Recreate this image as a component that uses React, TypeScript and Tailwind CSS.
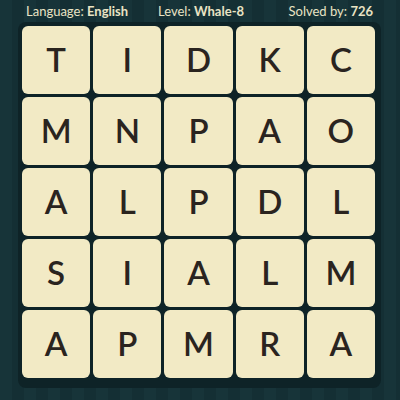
const rows = [
  ["T", "I", "D", "K", "C"],
  ["M", "N", "P", "A", "O"],
  ["A", "L", "P", "D", "L"],
  ["S", "I", "A", "L", "M"],
  ["A", "P", "M", "R", "A"],
];

export default function App() {
  return (
    <div className="w-[400px] h-[400px] overflow-hidden bg-[repeating-linear-gradient(90deg,#173439_0_12px,#142f34_12px_24px)] font-['Lato',sans-serif]">
      <div className="h-[22px] flex items-center pl-[26px] pr-[27px] text-[13px] text-[#e9e3c4] leading-none">
        <span className="w-[132px]">
          Language: <b className="font-bold">English</b>
        </span>
        <span>
          Level: <b className="font-bold">Whale-8</b>
        </span>
        <span className="ml-auto">
          Solved by: <b className="font-bold">726</b>
        </span>
      </div>
      <div className="ml-[18px] w-[363px] rounded-lg bg-[#0e2327] pt-[4px] pl-[4px] pr-[6px] pb-[10px]">
        <div className="grid grid-cols-5 gap-[3px]">
          {rows.flat().map((l, i) => (
            <div
              key={i}
              className="h-[68px] rounded-[6px] bg-[#f2eac5] flex items-center justify-center text-[33px] font-semibold text-[#2a241f]"
            >
              {l}
            </div>
          ))}
        </div>
      </div>
    </div>
  );
}
